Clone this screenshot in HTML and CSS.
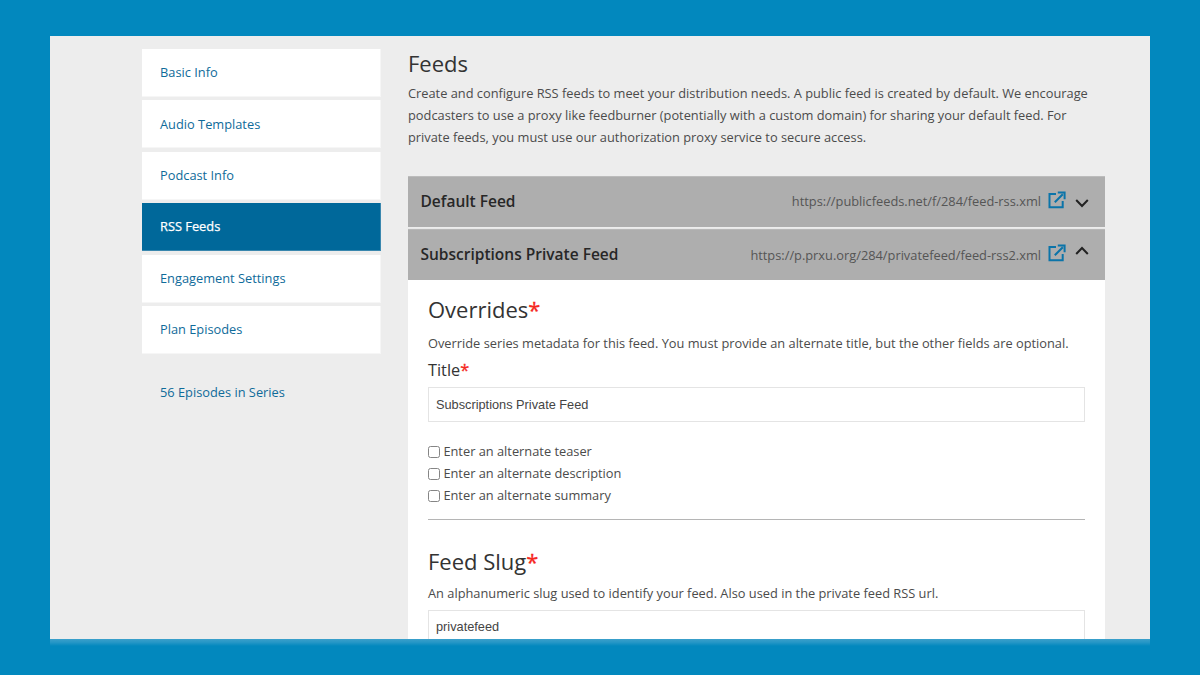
FILE: index.html
```html
<!DOCTYPE html>
<html lang="en">
<head>
<meta charset="utf-8">
<title>Feeds</title>
<link rel="stylesheet" href="styles.css">
</head>
<body>
<div class="window">
  <aside class="sidebar">
    <nav class="tabs">
      <a class="tab">Basic Info</a>
      <a class="tab">Audio Templates</a>
      <a class="tab">Podcast Info</a>
      <a class="tab tab-active">RSS Feeds</a>
      <a class="tab">Engagement Settings</a>
      <a class="tab">Plan Episodes</a>
    </nav>
    <a class="episodes">56 Episodes in Series</a>
  </aside>
  <main class="content">
    <h1 class="page-title">Feeds</h1>
    <p class="intro">Create and configure RSS feeds to meet your distribution needs. A public feed is created by default. We encourage<br>podcasters to use a proxy like feedburner (potentially with a custom domain) for sharing your default feed. For<br>private feeds, you must use our authorization proxy service to secure access.</p>
    <div class="feed-head">
      <span class="feed-name">Default Feed</span>
      <span class="feed-url">https://publicfeeds.net/f/284/feed-rss.xml</span>
      <svg class="link-icon" viewBox="0 0 18 18"><path d="M8 3H1.5V16.2H14.7V10M6.8 11.2 14.8 3.2M9.8 1.4H16.6V8.2"/></svg>
      <svg class="chevron" viewBox="0 0 14 10"><path d="M1.2 2 7 8 12.8 2"/></svg>
    </div>
    <div class="feed-head feed-head-open">
      <span class="feed-name">Subscriptions Private Feed</span>
      <span class="feed-url">https://p.prxu.org/284/privatefeed/feed-rss2.xml</span>
      <svg class="link-icon" viewBox="0 0 18 18"><path d="M8 3H1.5V16.2H14.7V10M6.8 11.2 14.8 3.2M9.8 1.4H16.6V8.2"/></svg>
      <svg class="chevron" viewBox="0 0 14 10"><path d="M1.2 8 7 2 12.8 8"/></svg>
    </div>
    <section class="panel">
      <h2 class="heading">Overrides<span class="req">*</span></h2>
      <p class="hint">Override series metadata for this feed. You must provide an alternate title, but the other fields are optional.</p>
      <h3 class="label">Title<span class="req">*</span></h3>
      <div class="field">Subscriptions Private Feed</div>
      <div class="checks">
        <div class="check"><span class="box"></span>Enter an alternate teaser</div>
        <div class="check"><span class="box"></span>Enter an alternate description</div>
        <div class="check"><span class="box"></span>Enter an alternate summary</div>
      </div>
      <div class="rule"></div>
      <h2 class="heading">Feed Slug<span class="req">*</span></h2>
      <p class="hint hint-slug">An alphanumeric slug used to identify your feed. Also used in the private feed RSS url.</p>
      <div class="field field-slug">privatefeed</div>
    </section>
  </main>
</div>
<div class="window-edge"></div>
</body>
</html>
```

FILE: styles.css
```css
* { box-sizing: border-box; }
body {
  margin: 0;
  height: 675px;
  padding: 36px 50px 0;
  overflow: hidden;
  background: #0288be;
  font-family: "Open Sans", sans-serif;
  font-size: 12.82px;
  color: #4b4b4b;
}
h1, h2, h3, p { margin: 0; font-weight: 400; }
.window {
  display: flex;
  height: 603px;
  overflow: hidden;
  background: #ededed;
}
.window-edge {
  height: 7px;
  background: linear-gradient(#3ba0cb, #2496c6 50%, #0288be);
}
.sidebar { width: 239px; margin: 13px 27px 0 92px; flex: none; }
.tabs { display: flex; flex-direction: column; gap: 3.4px; }
.tab {
  height: 48px;
  padding-left: 18px;
  line-height: 47px;
  background: #fff;
  border: solid #f6f6f6;
  border-width: 0 1px 1px 0;
  color: #0f6b9a;
}
.tab:nth-child(2) { line-height: 48px; }
.tab-active { background: #00689a; border-color: #3a87ae; color: #fff; -webkit-text-stroke: 0.25px #fff; }
.episodes { display: block; margin: 29px 0 0 18px; line-height: 18px; color: #0f6b9a; }
.content { width: 697px; flex: none; }
.page-title { padding-top: 11px; font-size: 22px; line-height: 32px; color: #333; }
.intro { margin-top: 3px; line-height: 22px; white-space: nowrap; }
.feed-head {
  display: flex;
  align-items: center;
  height: 51px;
  margin-top: 28px;
  padding: 0 16px 2px 12.5px;
  background: #aeaeae;
  border-top: 1px solid #bcbcbc;
}
.feed-head-open { margin-top: 2px; border-top-color: #b8b8b8; box-shadow: 0 -1px #e8e8e8; }
.feed-name { font-size: 15.5px; font-weight: 600; color: #272727; }
.feed-url { margin-left: auto; color: #555; }
.feed-head-open .feed-url { padding-top: 1px; }
.link-icon { width: 18px; height: 18px; margin: -2px 0 0 7px; fill: none; stroke: #0b74a9; stroke-width: 2; }
.chevron { width: 14px; height: 10px; margin: 4px 0 0 9px; fill: none; stroke: #222; stroke-width: 2; }
.feed-head-open .chevron { margin-top: -6px; }
.panel { height: 420px; padding: 13px 20px 0; background: #fff; }
.heading { font-size: 22px; line-height: 32px; color: #333; }
.req { color: #f5281e; -webkit-text-stroke: 0.3px #f5281e; }
.hint { margin-top: 7px; line-height: 22px; white-space: nowrap; }
.label { margin-top: 4px; font-size: 16.3px; line-height: 24px; color: #333; }
.field {
  height: 35px;
  margin-top: 5px;
  padding-left: 7px;
  border: 1px solid #e4e4e4;
  font: 12.75px/33px "Liberation Sans", sans-serif;
  color: #444;
}
.checks { margin-top: 18px; }
.check { display: flex; align-items: center; height: 22px; }
.box { width: 12px; height: 12px; margin: 2px 3.4px 0 0; border: 1px solid #858585; border-radius: 2.5px; background: #fff; }
.rule { height: 1px; margin: 13px 0 25px; background: #b5b5b5; }
.hint-slug { margin-top: 5px; }
.field-slug { margin-top: 6px; line-height: 32px; }
```
